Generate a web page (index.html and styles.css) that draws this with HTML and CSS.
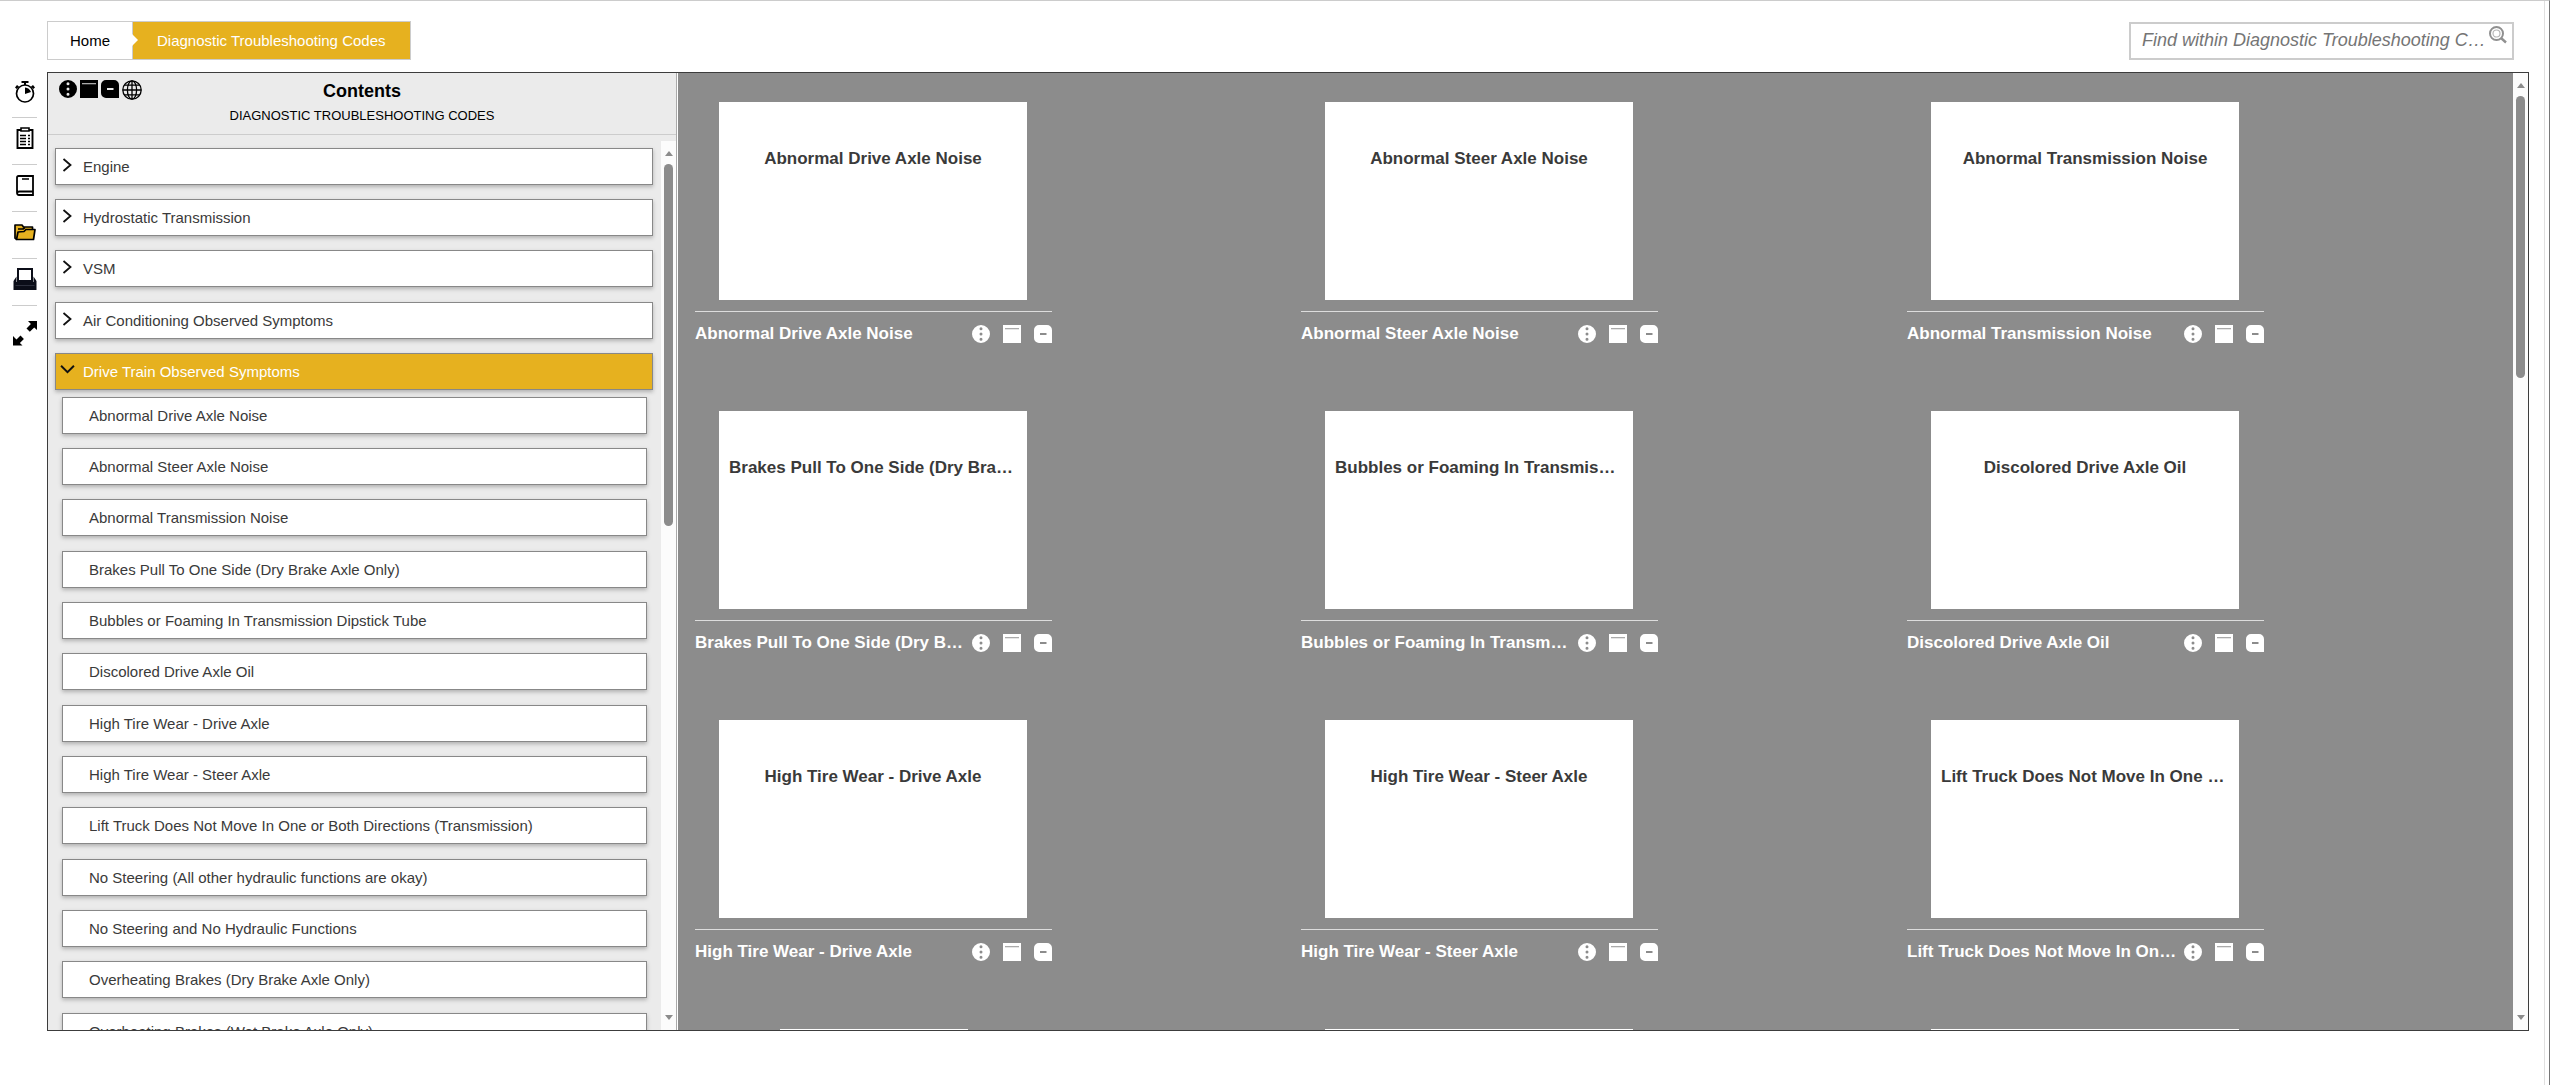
FILE: index.html
```html
<!DOCTYPE html>
<html lang="en">
<head>
<meta charset="utf-8">
<title>Diagnostic Troubleshooting Codes</title>
<link rel="stylesheet" href="styles.css">
</head>
<body>
<svg class="sprite" aria-hidden="true">
  <symbol id="i-dots" viewBox="0 0 18 18"><path fill-rule="evenodd" d="M9 0a9 9 0 1 1 0 18a9 9 0 1 1 0-18zM9 2.3a1.5 1.5 0 1 0 0 3a1.5 1.5 0 1 0 0-3zM9 7.5a1.5 1.5 0 1 0 0 3a1.5 1.5 0 1 0 0-3zM9 12.7a1.5 1.5 0 1 0 0 3a1.5 1.5 0 1 0 0-3z"/></symbol>
  <symbol id="i-window" viewBox="0 0 18 18"><path d="M0 0h18v18H0z"/><path class="slot" d="M2 3h14v1.3H2z"/></symbol>
  <symbol id="i-minus" viewBox="0 0 18 18"><path fill-rule="evenodd" d="M5 0h8a5 5 0 0 1 5 5v13H5a5 5 0 0 1-5-5V5a5 5 0 0 1 5-5zM6 8v2h6.500V8z"/></symbol>
  <symbol id="i-globe" viewBox="0 0 20 20"><g fill="none" stroke="currentColor" stroke-width="1.300"><circle cx="10" cy="10" r="9.200"/><ellipse cx="10" cy="10" rx="4.600" ry="9.200"/><path d="M10 .8v18.400M.8 10h18.400M2.300 5.200h15.400M2.300 14.800h15.400"/></g></symbol>
  <symbol id="i-right" viewBox="0 0 12 14"><path fill="none" stroke="#111" stroke-width="1.800" d="M2 1l7 6-7 6"/></symbol>
  <symbol id="i-down" viewBox="0 0 14 12"><path fill="none" stroke="#111" stroke-width="1.800" d="M1 2l6 6 6-6"/></symbol>
</svg>

<header class="topbar">
  <nav class="crumbs" aria-label="Breadcrumb">
    <a class="crumb" href="#">Home</a>
    <a class="crumb crumb-current" href="#">Diagnostic Troubleshooting Codes</a>
  </nav>
  <form class="search">
    <input class="search-input" type="text" aria-label="Find" placeholder="Find within Diagnostic Troubleshooting Codes">
    <button class="search-button" type="button" aria-label="Search">
      <svg width="18" height="18" viewBox="0 0 18 18" fill="none" stroke="#909090"><circle cx="7.500" cy="7.500" r="6.500" stroke-width="2"/><circle cx="7.500" cy="7.500" r="3.500" stroke-width="1.200" stroke="#b5b5b5"/><path d="M12 12l5 4.500" stroke-width="2.400"/></svg>
    </button>
  </form>
</header>

<div class="workspace">
  <nav class="rail" aria-label="Tools">
    <button class="rail-button" aria-label="Recent"><svg width="22" height="22" viewBox="0 0 22 22"><circle cx="11" cy="12.500" r="8.500" fill="none" stroke="#000" stroke-width="1.700"/><path d="M7.500 0h7v2h-2.500v2H10V2H7.500zM1 6.500l2-2.500 2 1.500-2.300 2.500zM21 6.500l-2-2.500-2 1.500 2.300 2.500zM11 6.500a7 7 0 0 1 6 4.500L11 13z"/></svg></button>
    <button class="rail-button" aria-label="Checklist"><svg width="22" height="22" viewBox="0 0 22 22"><path d="M3.500 3h15v18h-15z" fill="none" stroke="#000" stroke-width="1.900"/><path d="M7 1h8v3H7z" fill="#fff" stroke="#000" stroke-width="1.600"/><path d="M6 8.500h6M6 11.500h6M6 14.500h6M6 17.500h6M14 8.500h2M14 11.500h2M14 14.500h2M14 17.500h2" stroke="#000" stroke-width="1.300"/></svg></button>
    <button class="rail-button" aria-label="Manuals"><svg width="22" height="22" viewBox="0 0 22 22" fill="none" stroke="#000" stroke-width="1.800"><path d="M19 17.500V2H4.500Q3 2 3 3.500v15Q3 21 5 21h14v-3.500H5.500Q3.200 17.500 3.200 19"/><path d="M8 5h7" stroke-width="1.500"/></svg></button>
    <button class="rail-button" aria-label="Folders"><svg width="22" height="22" viewBox="0 0 22 22" fill="#e6b11f" stroke="#000" stroke-width="1.700" stroke-linejoin="round"><path d="M3 18.500L1 17V4h7l1.500 2h9v4"/><path d="M2.500 18.500L4 11l6-.5 2-2h9l-1.500 10z"/><path d="M4 8h5l2-1.500" fill="none"/></svg></button>
    <button class="rail-button" aria-label="Print"><svg width="24" height="24" viewBox="0 0 24 24"><path d="M.5 14l3-4.500V15h17V9.500l3 4.500v9H.5z" fill="#0b0d18"/><path d="M5 2h14v12H5z" fill="#fff" stroke="#0b0d18" stroke-width="2"/><path d="M2.500 18.500h19" stroke="#2c2f3c"/></svg></button>
    <button class="rail-button rail-expand" aria-label="Expand"><svg width="26" height="26" viewBox="0 0 26 26"><path d="M16 1h9v9l-2.800-2.600-4.400 4.400-3.300-3.300 4.400-4.400zM1 16v9.500h9.500l-2.600-2.600 4-4-3.400-3.400-4 4z"/></svg></button>
  </nav>

  <main class="frame">
    <aside class="contents">
      <header class="contents-head">
        <div class="legend">
          <svg width="18" height="18"><use href="#i-dots"/></svg>
          <svg width="18" height="18"><use href="#i-window"/></svg>
          <svg width="18" height="18"><use href="#i-minus"/></svg>
          <svg width="20" height="20"><use href="#i-globe"/></svg>
        </div>
        <h1 class="contents-title">Contents</h1>
        <p class="contents-sub">DIAGNOSTIC TROUBLESHOOTING CODES</p>
      </header>
      <div class="contents-body">
        <div class="tree">
          <div class="groups">
            <button class="row"><svg class="chevron"><use href="#i-right"/></svg>Engine</button>
            <button class="row"><svg class="chevron"><use href="#i-right"/></svg>Hydrostatic Transmission</button>
            <button class="row"><svg class="chevron"><use href="#i-right"/></svg>VSM</button>
            <button class="row"><svg class="chevron"><use href="#i-right"/></svg>Air Conditioning Observed Symptoms</button>
            <button class="row row-open" aria-expanded="true"><svg class="chevron"><use href="#i-down"/></svg>Drive Train Observed Symptoms</button>
          </div>
          <div class="leaves">
            <a class="row leaf" href="#">Abnormal Drive Axle Noise</a>
            <a class="row leaf" href="#">Abnormal Steer Axle Noise</a>
            <a class="row leaf" href="#">Abnormal Transmission Noise</a>
            <a class="row leaf" href="#">Brakes Pull To One Side (Dry Brake Axle Only)</a>
            <a class="row leaf" href="#">Bubbles or Foaming In Transmission Dipstick Tube</a>
            <a class="row leaf" href="#">Discolored Drive Axle Oil</a>
            <a class="row leaf" href="#">High Tire Wear - Drive Axle</a>
            <a class="row leaf" href="#">High Tire Wear - Steer Axle</a>
            <a class="row leaf" href="#">Lift Truck Does Not Move In One or Both Directions (Transmission)</a>
            <a class="row leaf" href="#">No Steering (All other hydraulic functions are okay)</a>
            <a class="row leaf" href="#">No Steering and No Hydraulic Functions</a>
            <a class="row leaf" href="#">Overheating Brakes (Dry Brake Axle Only)</a>
            <a class="row leaf" href="#">Overheating Brakes (Wet Brake Axle Only)</a>
          </div>
        </div>
        <div class="scrollbar"><i class="arrow arrow-up"></i><div class="track"><div class="thumb" style="height:43%"></div></div><i class="arrow arrow-down"></i></div>
      </div>
    </aside>

    <section class="gallery">
      <div class="cards">
        <article class="card"><a class="thumbnail" href="#"><span>Abnormal Drive Axle Noise</span></a><footer class="caption"><span class="name">Abnormal Drive Axle Noise</span><svg><use href="#i-dots"/></svg><svg><use href="#i-window"/></svg><svg><use href="#i-minus"/></svg></footer></article>
        <article class="card"><a class="thumbnail" href="#"><span>Abnormal Steer Axle Noise</span></a><footer class="caption"><span class="name">Abnormal Steer Axle Noise</span><svg><use href="#i-dots"/></svg><svg><use href="#i-window"/></svg><svg><use href="#i-minus"/></svg></footer></article>
        <article class="card"><a class="thumbnail" href="#"><span>Abnormal Transmission Noise</span></a><footer class="caption"><span class="name">Abnormal Transmission Noise</span><svg><use href="#i-dots"/></svg><svg><use href="#i-window"/></svg><svg><use href="#i-minus"/></svg></footer></article>
        <article class="card"><a class="thumbnail" href="#"><span>Brakes Pull To One Side (Dry Brake Axle Only)</span></a><footer class="caption"><span class="name">Brakes Pull To One Side (Dry Brake Axle Only)</span><svg><use href="#i-dots"/></svg><svg><use href="#i-window"/></svg><svg><use href="#i-minus"/></svg></footer></article>
        <article class="card"><a class="thumbnail" href="#"><span>Bubbles or Foaming In Transmission Dipstick Tube</span></a><footer class="caption"><span class="name">Bubbles or Foaming In Transmission Dipstick Tube</span><svg><use href="#i-dots"/></svg><svg><use href="#i-window"/></svg><svg><use href="#i-minus"/></svg></footer></article>
        <article class="card"><a class="thumbnail" href="#"><span>Discolored Drive Axle Oil</span></a><footer class="caption"><span class="name">Discolored Drive Axle Oil</span><svg><use href="#i-dots"/></svg><svg><use href="#i-window"/></svg><svg><use href="#i-minus"/></svg></footer></article>
        <article class="card"><a class="thumbnail" href="#"><span>High Tire Wear - Drive Axle</span></a><footer class="caption"><span class="name">High Tire Wear - Drive Axle</span><svg><use href="#i-dots"/></svg><svg><use href="#i-window"/></svg><svg><use href="#i-minus"/></svg></footer></article>
        <article class="card"><a class="thumbnail" href="#"><span>High Tire Wear - Steer Axle</span></a><footer class="caption"><span class="name">High Tire Wear - Steer Axle</span><svg><use href="#i-dots"/></svg><svg><use href="#i-window"/></svg><svg><use href="#i-minus"/></svg></footer></article>
        <article class="card"><a class="thumbnail" href="#"><span>Lift Truck Does Not Move In One or Both Directions (Transmission)</span></a><footer class="caption"><span class="name">Lift Truck Does Not Move In One or Both Directions (Transmission)</span><svg><use href="#i-dots"/></svg><svg><use href="#i-window"/></svg><svg><use href="#i-minus"/></svg></footer></article>
        <article class="card"><a class="thumbnail thumbnail-narrow" href="#" aria-label="Page preview"></a></article>
        <article class="card"><a class="thumbnail" href="#" aria-label="Page preview"></a></article>
        <article class="card"><a class="thumbnail" href="#" aria-label="Page preview"></a></article>
      </div>
      <div class="scrollbar"><i class="arrow arrow-up"></i><div class="track"><div class="thumb" style="height:31%"></div></div><i class="arrow arrow-down"></i></div>
    </section>
  </main>
</div>
</body>
</html>
```
FILE: styles.css
```css
* { box-sizing: border-box; }

body {
  margin: 0;
  height: 100vh;
  display: flex;
  flex-direction: column;
  padding: 20px 20px 54px 3px;
  border-top: 1px solid #ccc;
  border-right: 1px solid #777;
  box-shadow: inset -4px 0 #fff, inset -5px 0 #e0e0e0;
  background: #fff;
  color: #3a3a3a;
  font-family: "Liberation Sans", Arial, sans-serif;
  font-size: 15px;
  line-height: 20px;
  overflow: hidden;
}

html { overflow: hidden; }
a { color: inherit; text-decoration: none; }
button { font: inherit; color: inherit; cursor: pointer; }
.sprite { display: none; }
.slot { fill: #aaa; }

/* Top bar */
.topbar {
  display: flex;
  justify-content: space-between;
  padding: 0 15px 12px 44px;
}

.crumbs { display: flex; border: 1px solid #ccc; height: 39px; }
.crumb {
  position: relative;
  padding: 9px 22px;
  color: #000;
}
.crumb-current {
  padding: 9px 24px;
  border-left: 1px solid #ccc;
  background: #e6b11f;
  color: #fff;
}
.crumb-current::before {
  content: "";
  position: absolute;
  left: -1px;
  top: 12px;
  border: 6px solid transparent;
  border-left-color: #fff;
  border-right: 0;
}

.search {
  display: flex;
  align-items: flex-start;
  width: 385px;
  height: 38px;
  margin-top: 1px;
  border: 2px solid #ccc;
}
.search-input {
  flex: 1;
  min-width: 0;
  height: 32px;
  padding: 0 0 0 11px;
  border: 0;
  outline: 0;
  background: none;
  font: italic 18px "Liberation Sans", Arial, sans-serif;
  text-overflow: ellipsis;
}
.search-input::placeholder { color: #757575; opacity: 1; }
.search-button { display: flex; padding: 2px 5px 2px 0; border: 0; background: none; }

/* Tool rail */
.workspace { flex: 1; min-height: 0; display: flex; }
.rail { width: 44px; flex: none; padding-left: 9px; }
.rail-button {
  display: flex;
  align-items: center;
  justify-content: center;
  width: 25px;
  height: 47px;
  padding: 0 0 6px;
  border: 0;
  border-bottom: 1px solid #ccc;
  background: none;
}
.rail-button svg { flex: none; }
.rail-button:first-child { height: 46px; }
.rail-expand { height: 56px; padding-bottom: 2px; border: 0; }

.frame {
  flex: 1;
  min-width: 0;
  display: flex;
  border: 1px solid #3c3c3c;
  background: #8c8c8c;
}

/* Contents panel */
.contents {
  width: 630px;
  flex: none;
  display: flex;
  flex-direction: column;
  background: #ebebeb;
  border-right: 1px solid #fff;
  box-shadow: inset -1px 0 #aaa;
}
.contents-head {
  position: relative;
  height: 62px;
  padding-top: 8px;
  border-bottom: 1px solid #ccc;
  margin-right: 1px;
  color: #000;
  text-align: center;
}
.legend { position: absolute; left: 11px; top: 7px; display: flex; gap: 3px; }
.legend .slot { fill: #ccc; }
.contents-title { margin: 0; font-size: 18px; line-height: 20px; }
.contents-sub { margin: 5px 0 0; font-size: 13px; line-height: 20px; }
.contents-body { flex: 1; min-height: 0; display: flex; padding: 6px 1px 0 0; }
.tree { flex: 1; overflow: hidden; padding: 7px 8px 0 7px; }
.leaves { padding: 7px 6px 0 7px; }

.row {
  display: flex;
  align-items: center;
  width: 100%;
  height: 37px;
  margin-bottom: 14px;
  padding: 0 4px;
  border: 1px solid #888;
  background: #fff;
  box-shadow: 0 2px 4px rgba(0, 0, 0, .25);
  text-align: left;
}
.row:nth-child(3n) { margin-bottom: 15px; }
.row-open { background: #e6b11f; color: #fff; margin-bottom: 0; }
.leaf { padding: 0 26px; }
.chevron { width: 15px; height: 14px; margin: 0 8px 4px 0; flex: none; }

/* Scrollbars */
.scrollbar {
  width: 15px;
  flex: none;
  display: flex;
  flex-direction: column;
  align-items: center;
  padding: 10px 0;
  background: #fcfcfc;
}
.arrow { border: 4px solid transparent; }
.arrow-up { border-top: 0; border-bottom: 5px solid #8c8c8c; }
.arrow-down { border-bottom: 0; border-top: 5px solid #8c8c8c; }
.track { flex: 1; margin: 8px 0; }
.thumb { width: 9px; border-radius: 5px; background: #8c8c8c; }

/* Card gallery */
.gallery { flex: 1; min-width: 0; display: flex; }
.cards {
  flex: 1;
  display: grid;
  grid-template-columns: repeat(3, 1fr);
  grid-auto-rows: 309px;
  padding: 29px 0 0 17px;
  overflow: hidden;
}
.card { width: 357px; }
.thumbnail {
  display: block;
  width: 308px;
  height: 198px;
  margin: 0 24px 11px;
  padding: 47px 10px 0;
  background: #fff;
  font-weight: bold;
  font-size: 17px;
  text-align: center;
}
.thumbnail span, .name {
  display: block;
  overflow: hidden;
  text-overflow: ellipsis;
  white-space: nowrap;
}
.thumbnail-narrow { width: 188px; margin: 0 auto; }
.caption {
  display: flex;
  align-items: center;
  gap: 13px;
  padding-top: 12px;
  border-top: 1px solid #ddd;
  color: #fff;
}
.name { flex: 1; margin-right: -7px; font-weight: bold; font-size: 17px; }
.caption svg { width: 18px; height: 18px; flex: none; fill: #fff; }
```
